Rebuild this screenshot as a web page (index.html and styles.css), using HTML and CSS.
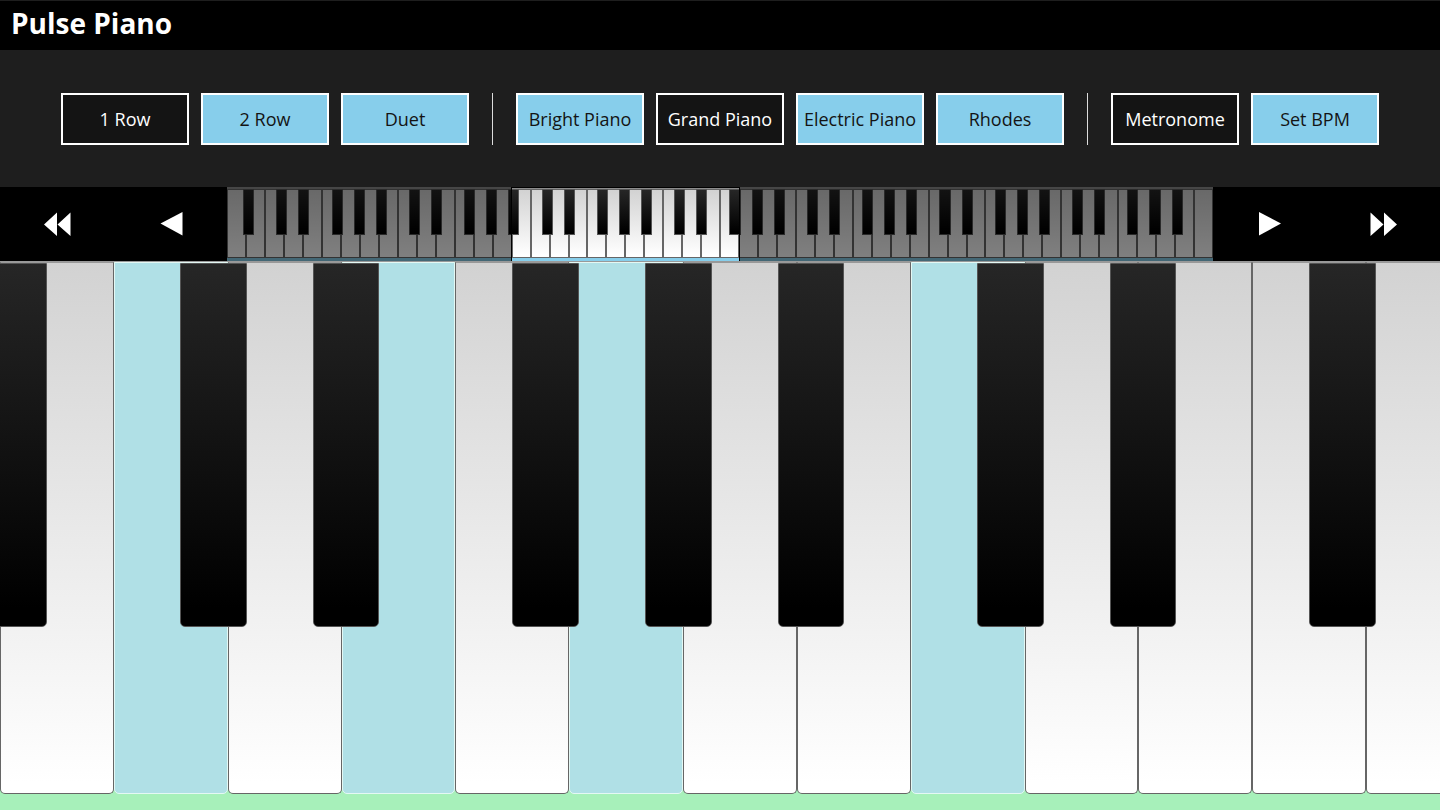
FILE: index.html
```html
<!DOCTYPE html>
<html lang="en">
<head>
    <meta charset="UTF-8">
    <meta name="viewport" content="width=device-width, initial-scale=1.0">
    <title>Pulse Piano</title>
    <link rel="stylesheet" href="styles.css">
</head>
<body>
    <header class="title-bar">
        <h1>Pulse Piano</h1>
    </header>

    <div class="toolbar">
        <div class="group">
            <button type="button" class="btn selected">1 Row</button>
            <button type="button" class="btn">2 Row</button>
            <button type="button" class="btn">Duet</button>
        </div>
        <div class="separator"></div>
        <div class="group">
            <button type="button" class="btn">Bright Piano</button>
            <button type="button" class="btn selected">Grand Piano</button>
            <button type="button" class="btn">Electric Piano</button>
            <button type="button" class="btn">Rhodes</button>
        </div>
        <div class="separator"></div>
        <div class="group">
            <button type="button" class="btn selected">Metronome</button>
            <button type="button" class="btn">Set BPM</button>
        </div>
    </div>

    <div class="navigator">
        <div class="arrows">
            <button type="button" class="arrow" aria-label="Octave down">
                <svg width="28" height="24" viewBox="0 0 28 24"><path d="M14 .500v23.500L1 12.500zM27.500 .500v23.500L14.500 12.500z"/></svg>
            </button>
            <button type="button" class="arrow" aria-label="Key down">
                <svg width="24" height="24" viewBox="0 0 24 24"><path d="M23.500 0v23.500L1.500 11.500z"/></svg>
            </button>
        </div>
        <div class="overview">
            <div class="keys" id="overviewKeys"></div>
            <div class="range">
                <div class="shade before"></div>
                <div class="window"></div>
                <div class="shade after"></div>
            </div>
        </div>
        <div class="arrows">
            <button type="button" class="arrow" aria-label="Key up">
                <svg width="24" height="24" viewBox="0 0 24 24"><path d="M2 0v23.500L24 11.500z"/></svg>
            </button>
            <button type="button" class="arrow" aria-label="Octave up">
                <svg width="28" height="24" viewBox="0 0 28 24"><path d="M1.500 .500v23.500L14.500 12.500zM15 .500v23.500L28 12.500z"/></svg>
            </button>
        </div>
    </div>

    <main class="piano">
        <div class="keys" id="pianoKeys"></div>
    </main>

    <script src="script.js"></script>
</body>
</html>
```
FILE: styles.css
```css
/* Global Styles */
* {
    box-sizing: border-box;
}

body {
    margin: 0;
    min-height: 100vh;
    display: flex;
    flex-direction: column;
    font-family: "Open Sans", "Noto Sans", sans-serif;
    background: #1e1e1e;
    color: white;
}

button {
    margin: 0;
    padding: 0;
    border: none;
    font-family: inherit;
    cursor: pointer;
}

/* Title */
.title-bar {
    background: black;
    border-top: 1px solid #1e1e1e;
    padding: 3px 11px 8px;
}

.title-bar h1 {
    margin: 0;
    font-size: 28px;
    line-height: 38px;
    font-weight: bold;
}

/* Toolbar */
.toolbar {
    display: flex;
    justify-content: center;
    gap: 23px;
    padding: 43px 16px 42px;
}

.group {
    display: flex;
    gap: 12px;
}

.separator {
    width: 1px;
    background: #ddd;
}

.btn {
    width: 128px;
    height: 52px;
    border: 2px solid white;
    background: #87ceeb;
    color: #141414;
    font-size: 18px;
    white-space: nowrap;
}

.btn.selected {
    background: #141414;
    color: white;
}

/* Navigator */
.navigator {
    display: grid;
    grid-template-columns: 3fr 13fr 3fr;
    height: 74px;
    background: black;
}

.arrows {
    display: flex;
}

.arrow {
    flex: 1;
    display: flex;
    align-items: center;
    justify-content: center;
    background: black;
}

.arrow svg {
    fill: white;
}

.overview {
    position: relative;
    padding: 2px 0 3px;
    background: linear-gradient(#8c8c8c 50%, #87ceeb 50%);
}

.range {
    position: absolute;
    inset: 0;
    display: flex;
}

.shade {
    background: rgba(0, 0, 0, 0.5);
}

.before {
    flex: 15;
}

.window {
    flex: 12;
    border: solid black;
    border-width: 1px 1px 0;
}

.after {
    flex: 25;
}

/* Keys */
.keys {
    position: relative;
    display: flex;
    height: 100%;
}

.white {
    flex: 1;
    border: 1px solid #666;
    border-radius: 0 0 5px 5px;
    background: linear-gradient(#d2d2d2, white 98%);
}

.white.pressed {
    background: #b0e0e6;
    border-color: #e4f8f4;
}

/* Black keys are one semitone wide and lie over the white ones */
.black {
    position: absolute;
    top: 0;
    width: calc(700% / 12 / var(--count));
    height: 67%;
    border: 1px solid #555;
    border-radius: 0 0 5px 5px;
    background: linear-gradient(#262626, black 95%);
}

.overview .white,
.overview .black {
    border-radius: 0;
}

/* Piano */
.piano {
    flex: 1;
    display: flex;
    padding-bottom: 16px;
    border-top: 1px solid #999;
    background: #a7f0ba;
    overflow: hidden;
}

/* The last key runs off the right edge */
.piano .keys {
    flex: none;
    width: calc(100% + 40px);
    height: auto;
}

.piano .white {
    border-top-color: #999;
}

.piano .white.pressed {
    border-top-color: #e4f8f4;
}

.piano .black {
    top: 1px;
    height: 68.5%;
}
```
FILE: script.js
```
// Semitones (from C) that have a black key
const blackSemitones = [1, 3, 6, 8, 10];

// firstC is the index of the first white key that is a C
function buildKeys(id, count, firstC, firstBlack, pressed) {
    const keys = document.getElementById(id);
    keys.style.setProperty("--count", count);

    for (let i = 0; i < count; i++) {
        const key = document.createElement("button");
        key.type = "button";
        key.className = pressed.includes(i) ? "white pressed" : "white";
        keys.appendChild(key);
    }

    for (let octaveStart = firstC - 7; octaveStart < count; octaveStart += 7) {
        blackSemitones.forEach(semitone => {
            const left = octaveStart + semitone * 7 / 12;
            if (left < firstBlack || left > count - 1) {
                return;
            }
            const key = document.createElement("button");
            key.type = "button";
            key.className = "black";
            key.style.left = `${left / count * 100}%`;
            keys.appendChild(key);
        });
    }
}

// The full 88 keys start on A, the piano view starts halfway under an A#
buildKeys("overviewKeys", 52, 2, 0, []);
buildKeys("pianoKeys", 13, 1, -0.5, [1, 3, 5, 8]);
```
